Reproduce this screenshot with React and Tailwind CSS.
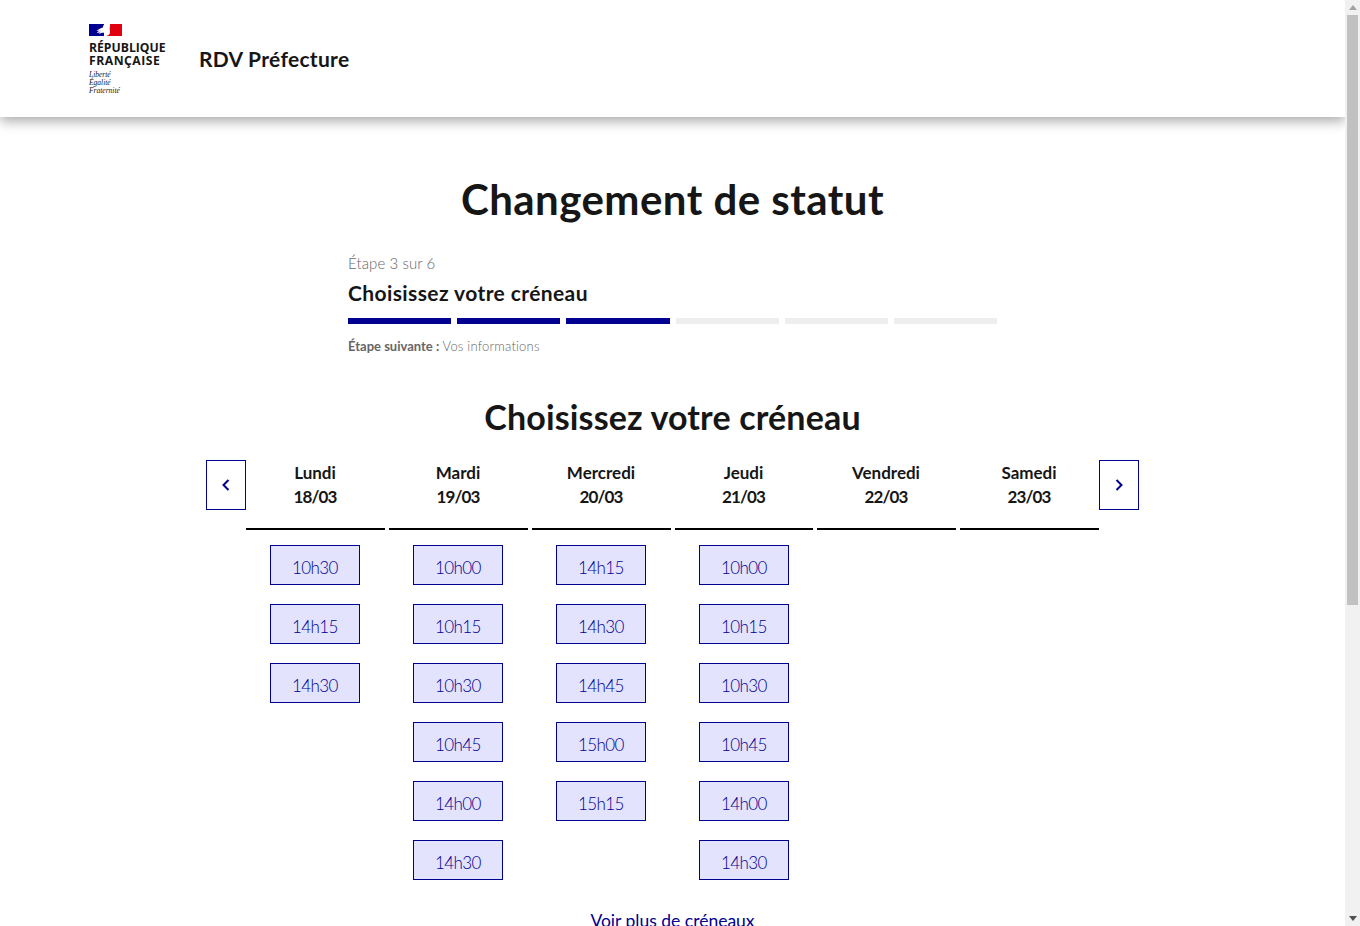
const days = [
  { name: "Lundi", date: "18/03", slots: ["10h30", "14h15", "14h30"] },
  { name: "Mardi", date: "19/03", slots: ["10h00", "10h15", "10h30", "10h45", "14h00", "14h30"] },
  { name: "Mercredi", date: "20/03", slots: ["14h15", "14h30", "14h45", "15h00", "15h15"] },
  { name: "Jeudi", date: "21/03", slots: ["10h00", "10h15", "10h30", "10h45", "14h00", "14h30"] },
  { name: "Vendredi", date: "22/03", slots: [] },
  { name: "Samedi", date: "23/03", slots: [] },
];

function Flag() {
  return (
    <svg width="33" height="12" viewBox="0 0 33 12" className="block">
      <rect width="33" height="12" fill="#fff" />
      <rect width="15" height="12" fill="#000091" />
      <path d="M21 0h12v12H17.500c1.500-.5 2.800-1.500 3.300-2.500.2-.8-.2-1.500.2-2.200.2-.8-.6-1.800-.3-3C20.900 3 21.300 1.200 21 0z" fill="#e1000f" />
      <path d="M15 0.500c-.6 1-1 2.200-1.400 3.200-1.500.3-4 1.300-6.300 3.300 1.500-.4 2.400-.3 2.900-.2-.9.6-1.800 1.400-2.400 2.300 1.100-.6 2.300-.8 3-.7-.3.5-.5 1.200-.5 1.800 1-.9 2.500-1.400 4.700-1.400z" fill="#fff" />
      <path d="M9 7.600c.8-.5 1.700-.9 2.500-1.100M10 8.700c.9-.5 1.700-.7 2.600-.9" stroke="#8d8dc8" strokeWidth=".5" fill="none" />
    </svg>
  );
}

function Chevron({ dir }) {
  return (
    <svg width="10" height="14" viewBox="0 0 10 14" fill="none" stroke="#000091" strokeWidth="2">
      <path d={dir === "left" ? "M7.500 2 2.500 7l5 5" : "M2.500 2l5 5-5 5"} />
    </svg>
  );
}

function Scrollbar() {
  return (
    <aside className="w-[15px] h-[926px] shrink-0 bg-[#f1f1f1] flex flex-col items-stretch">
      <div className="h-[15px] flex items-center justify-center">
        <svg width="8" height="5" viewBox="0 0 8 5"><path d="M4 0l4 5H0z" fill="#a3a3a3" /></svg>
      </div>
      <div className="h-[590px] mx-[2px] bg-[#c1c1c1]" />
      <div className="flex-1" />
      <div className="h-[15px] flex items-center justify-center">
        <svg width="8" height="5" viewBox="0 0 8 5"><path d="M4 5l4-5H0z" fill="#505050" /></svg>
      </div>
    </aside>
  );
}

export default function App() {
  return (
    <div className="flex h-[926px] overflow-hidden bg-white text-[#161616] font-['Lato','Noto_Sans',sans-serif]">
      <div className="w-[1345px] shrink-0 overflow-hidden">
        <header className="relative h-[117px] bg-white shadow-[0_4px_12px_rgba(0,0,0,0.35)] flex items-start pl-[89px]">
          <div className="w-[110px] pt-[24px]">
            <Flag />
            <div className="mt-[5px] text-[12.2px] leading-[13px] font-bold uppercase font-['Open_Sans',sans-serif]">
              <div>République</div>
              <div className="tracking-[0.5px]">Française</div>
            </div>
            <div className="mt-[4px] text-[7.5px] leading-[8px] italic font-['Liberation_Serif',serif]">
              <div>Liberté</div>
              <div>Égalité</div>
              <div>Fraternité</div>
            </div>
          </div>
          <div className="pt-[45px] text-[21px] leading-[28px] font-bold tracking-[0.3px]">RDV Préfecture</div>
        </header>

        <main className="flex flex-col items-center">
          <h1 className="mt-[57px] text-[42px] leading-[50px] font-bold tracking-[0.45px]">Changement de statut</h1>

          <section className="mt-[27px] w-[649px]">
            <div className="text-[15px] leading-[24px] font-light tracking-[0.1px] text-[#666666]">Étape 3 sur 6</div>
            <div className="mt-[4px] text-[21px] leading-[28px] font-bold tracking-[0.4px]">Choisissez votre créneau</div>
            <div className="mt-[11px] flex gap-[6px]">
              {[0, 1, 2, 3, 4, 5].map((i) => (
                <div key={i} className={i < 3 ? "h-[6px] flex-1 bg-[#000091]" : "h-[6px] flex-1 bg-[#eeeeee]"} />
              ))}
            </div>
            <div className="mt-[12px] text-[13px] leading-[20px] text-[#666666]">
              <span className="font-bold">Étape suivante :</span> <span className="font-light tracking-[0.2px]">Vos informations</span>
            </div>
          </section>

          <h2 className="mt-[41px] text-[34px] leading-[40px] font-bold tracking-[0.15px]">Choisissez votre créneau</h2>

          <div className="mt-[23px] flex items-start">
            <button className="w-[40px] h-[50px] border border-[#000091] bg-white flex items-center justify-center">
              <Chevron dir="left" />
            </button>
            <div className="grid grid-cols-[139px_139px_139px_138px_139px_139px] gap-x-[4px] w-[853px]">
              {days.map((d) => (
                <div key={d.name} className="flex flex-col">
                  <div className="w-full h-[70px] border-b-2 border-black text-center text-[17px] leading-[24px] font-bold pt-[1px] pr-[1px]">
                    <div>{d.name}</div>
                    <div className="tracking-[-0.9px]">{d.date}</div>
                  </div>
                  <div className="mt-[15px] ml-[24px] flex flex-col gap-[19px]">
                    {d.slots.map((s) => (
                      <button key={s} className="w-[90px] h-[40px] border border-[#000091] bg-[#e3e3fd] text-[#000091] text-[17px] leading-[24px] font-light tracking-[-0.6px] pt-[5px]">
                        {s}
                      </button>
                    ))}
                  </div>
                </div>
              ))}
            </div>
            <button className="w-[40px] h-[50px] border border-[#000091] bg-white flex items-center justify-center">
              <Chevron dir="right" />
            </button>
          </div>

          <a href="#" className="mt-[29px] text-[17.5px] leading-[24px] text-[#000091] underline underline-offset-[3px]">Voir plus de créneaux</a>
        </main>
      </div>
      <Scrollbar />
    </div>
  );
}
